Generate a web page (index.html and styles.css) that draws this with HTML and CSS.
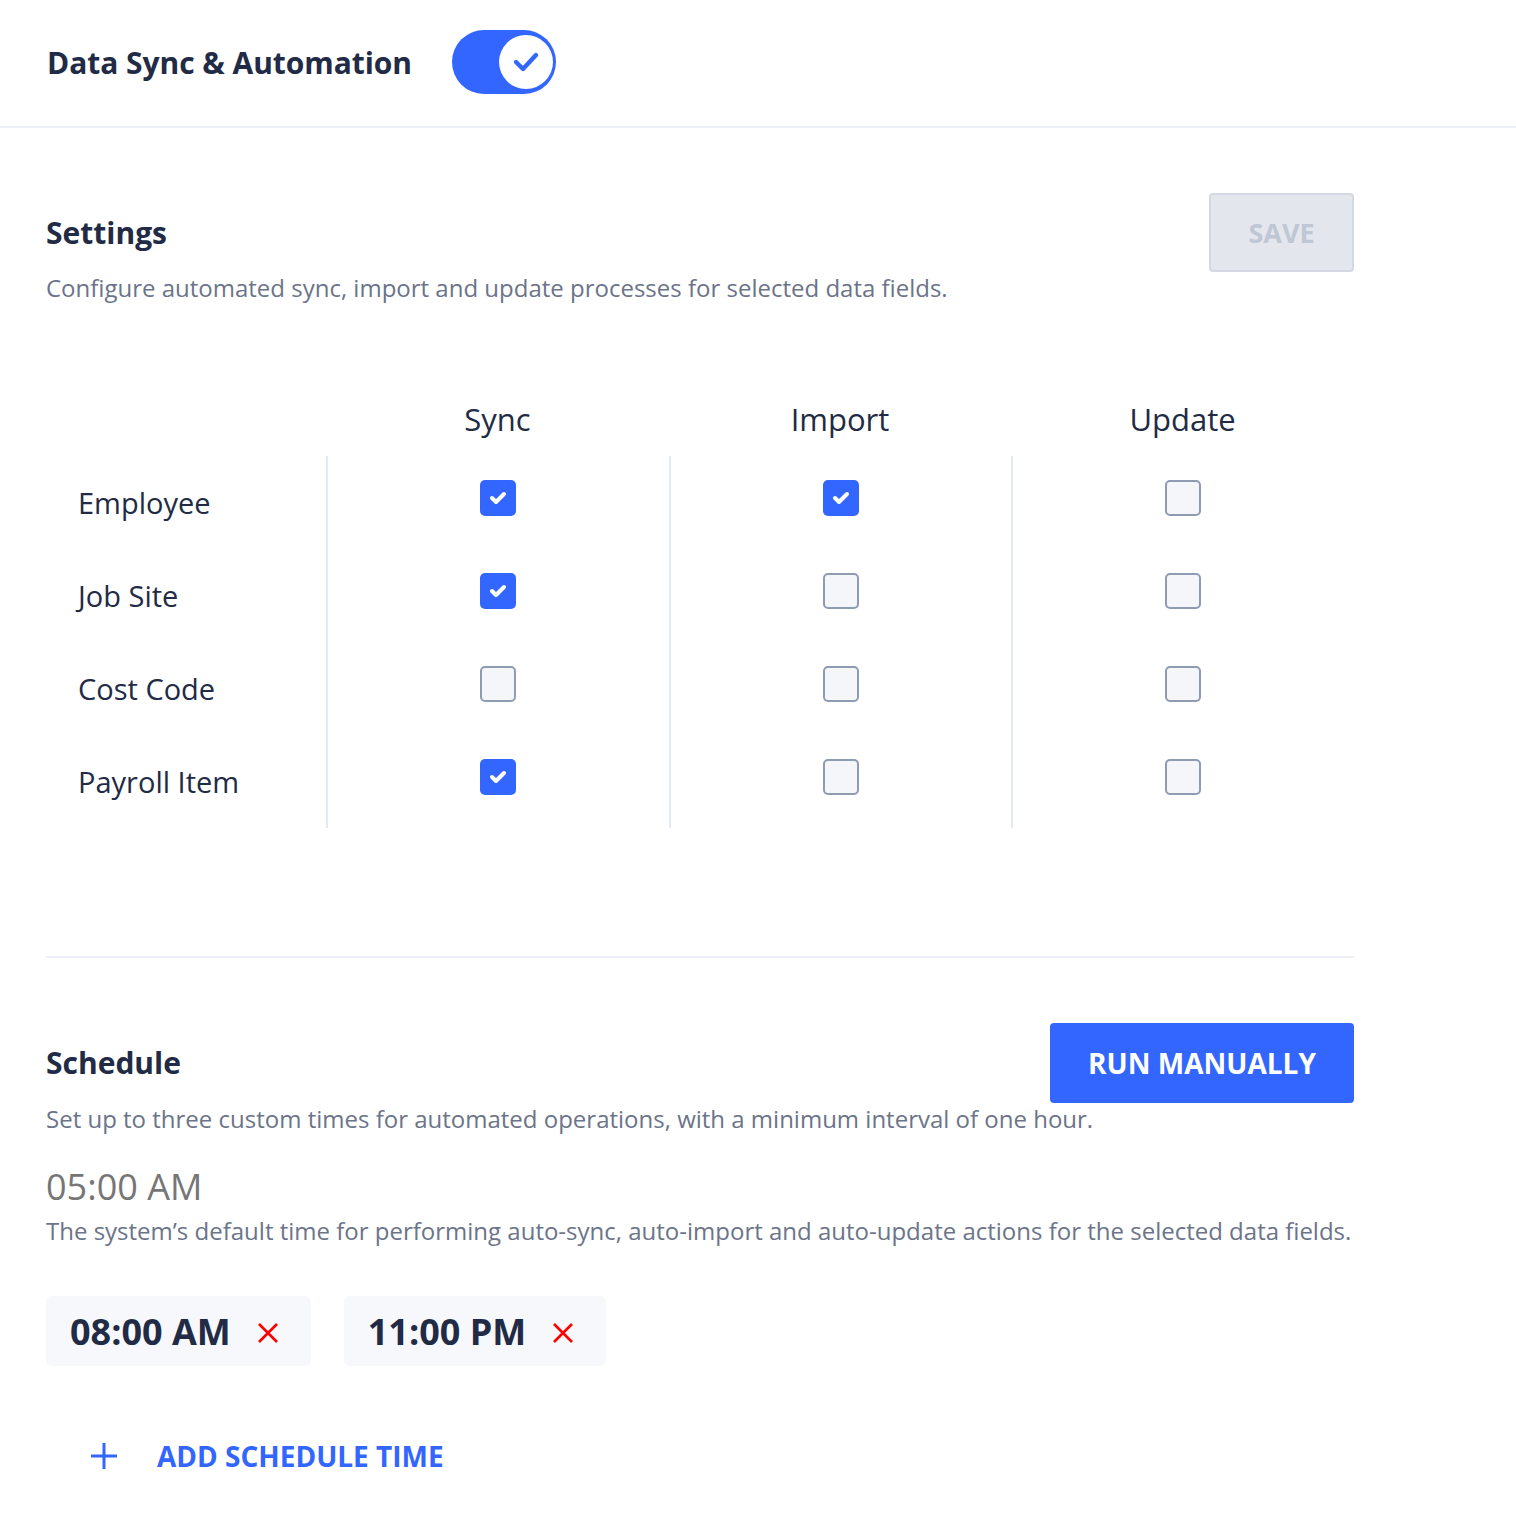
FILE: index.html
```html
<!DOCTYPE html>
<html>
<head>
<meta charset="utf-8">
<link rel="stylesheet" href="styles.css">
</head>
<body>
<header class="topbar">
  <h1 class="title">Data Sync &amp; Automation</h1>
  <div class="toggle">
    <div class="knob">
      <svg width="28" height="24" viewBox="0 0 28 24"><path d="M4 12 L11 19 L24 5" fill="none" stroke="#3366ff" stroke-width="4.4" stroke-linecap="round" stroke-linejoin="round"/></svg>
    </div>
  </div>
</header>

<main class="content">
  <section class="block settings">
    <div class="block-head">
      <h2 class="heading">Settings</h2>
      <button class="btn btn-disabled">SAVE</button>
    </div>
    <p class="desc">Configure automated sync, import and update processes for selected data fields.</p>

    <div class="grid">
      <div class="hcell"></div>
      <div class="hcell col">Sync</div>
      <div class="hcell col">Import</div>
      <div class="hcell col">Update</div>

      <div class="label">Employee</div>
      <div class="cell line"><span class="cb on"></span></div>
      <div class="cell line"><span class="cb on"></span></div>
      <div class="cell line"><span class="cb"></span></div>

      <div class="label">Job Site</div>
      <div class="cell line"><span class="cb on"></span></div>
      <div class="cell line"><span class="cb"></span></div>
      <div class="cell line"><span class="cb"></span></div>

      <div class="label">Cost Code</div>
      <div class="cell line"><span class="cb"></span></div>
      <div class="cell line"><span class="cb"></span></div>
      <div class="cell line"><span class="cb"></span></div>

      <div class="label">Payroll Item</div>
      <div class="cell line"><span class="cb on"></span></div>
      <div class="cell line"><span class="cb"></span></div>
      <div class="cell line"><span class="cb"></span></div>
    </div>
  </section>

  <section class="block schedule">
    <div class="block-head">
      <h2 class="heading">Schedule</h2>
      <button class="btn btn-primary">RUN MANUALLY</button>
    </div>
    <p class="desc">Set up to three custom times for automated operations, with a minimum interval of one hour.</p>
    <div class="default-time">05:00 AM</div>
    <p class="desc default-desc">The system’s default time for performing auto-sync, auto-import and auto-update actions for the selected data fields.</p>

    <div class="chips">
      <div class="chip"><span>08:00 AM</span>
        <svg class="x" width="22" height="22" viewBox="0 0 22 22"><path d="M2 2 L20 20 M20 2 L2 20" stroke="#ff0000" stroke-width="2.6"/></svg>
      </div>
      <div class="chip"><span>11:00 PM</span>
        <svg class="x" width="22" height="22" viewBox="0 0 22 22"><path d="M2 2 L20 20 M20 2 L2 20" stroke="#ff0000" stroke-width="2.6"/></svg>
      </div>
    </div>

    <div class="add">
      <svg width="28" height="28" viewBox="0 0 28 28"><path d="M14 1 V27 M1 14 H27" stroke="#3366ff" stroke-width="3"/></svg>
      <span>ADD SCHEDULE TIME</span>
    </div>
  </section>
</main>
</body>
</html>
```

FILE: styles.css
```css
* { box-sizing: border-box; }
html, body { margin: 0; padding: 0; background: #fff; }
body {
  font-family: "Open Sans", "Noto Sans", sans-serif;
  color: #222b45;
  width: 1516px;
}
h1, h2, p { margin: 0; }

.topbar {
  height: 128px;
  display: flex;
  align-items: center;
  gap: 40px;
  padding: 0 0 2px 47px;
  border-bottom: 2px solid #edf1f7;
}
.title {
  font-size: 30px;
  font-weight: 700;
  letter-spacing: -0.05px;
}
.toggle {
  width: 104px;
  height: 64px;
  border-radius: 32px;
  background: #3366ff;
  display: flex;
  align-items: center;
  justify-content: flex-end;
  padding-right: 3px;
}
.knob {
  width: 54px;
  height: 54px;
  border-radius: 50%;
  background: #fff;
  display: flex;
  align-items: center;
  justify-content: center;
}

.content {
  width: 1354px;
  padding-left: 46px;
}
.block-head {
  display: flex;
  justify-content: space-between;
  align-items: center;
}
.settings { padding-top: 65px; border-bottom: 2px solid #edf1f7; padding-bottom: 128px; }
.heading {
  font-size: 30px;
  font-weight: 700;
  line-height: 40px;
}
.desc {
  font-size: 24px;
  color: #6b7489;
  line-height: 32px;
}
.btn {
  font-family: inherit;
  font-weight: 700;
  border-radius: 4px;
  cursor: pointer;
  flex-shrink: 0;
}
.btn-disabled {
  width: 145px;
  height: 79px;
  background: #e4e6ee;
  border: 2px solid #d3d8e2;
  color: #bfc6d4;
  font-size: 27px;
}
.btn-primary {
  width: 304px;
  height: 80px;
  background: #3366ff;
  border: none;
  color: #fff;
  font-size: 28px;
}

.grid {
  display: grid;
  grid-template-columns: 280px 343px 342px 343px;
  margin-top: 95px;
}
.hcell {
  height: 57px;
  font-size: 31px;
  text-align: center;
  line-height: 40px;
}
.label {
  height: 93px;
  padding-left: 32px;
  padding-top: 27px;
  font-size: 29px;
  line-height: 40px;
  color: #222b45;
}
.cell {
  height: 93px;
  display: flex;
  justify-content: center;
  align-items: flex-start;
  padding-top: 24px;
  padding-right: 1px;
}
.line { border-left: 2px solid #e4e9f2; }
.cb {
  width: 36px;
  height: 36px;
  border-radius: 5px;
  border: 2px solid #8f9bb3;
  background: #f5f6f9;
  display: block;
}
.cb.on {
  border: none;
  background: #3366ff url("data:image/svg+xml;utf8,<svg xmlns='http://www.w3.org/2000/svg' width='36' height='36' viewBox='0 0 36 36'><path d='M12 18 L16 22 L24 14' fill='none' stroke='white' stroke-width='4' stroke-linecap='round' stroke-linejoin='round'/></svg>") center no-repeat;
}

.schedule { padding-top: 65px; }
.default-time {
  font-size: 36px;
  color: #767676;
  margin-top: 30px;
  line-height: 44px;
}
.default-desc { margin-top: 6px; }
.chips {
  display: flex;
  gap: 33px;
  margin-top: 49px;
}
.chip {
  height: 70px;
  background: #f7f8fc;
  border-radius: 6px;
  display: flex;
  align-items: center;
  padding: 0 32px 0 24px;
  gap: 26px;
  font-size: 36px;
  font-weight: 700;
}
.x { margin-top: 3px; }
.add {
  display: flex;
  align-items: center;
  gap: 39px;
  padding-left: 44px;
  margin-top: 71px;
  color: #3366ff;
  font-size: 28px;
  line-height: 38px;
  font-weight: 700;
}
```
